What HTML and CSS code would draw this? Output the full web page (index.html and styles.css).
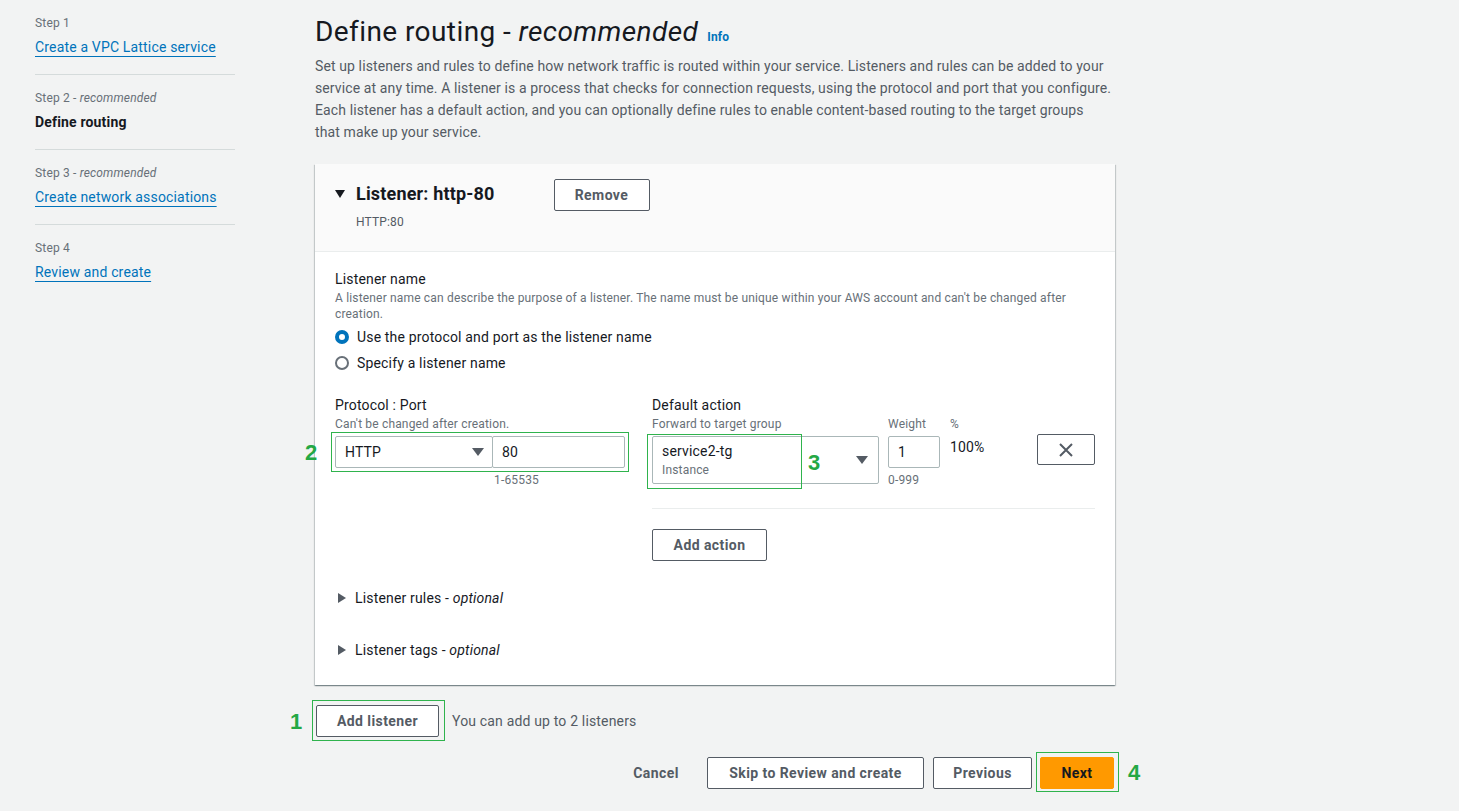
FILE: index.html
```html
<!DOCTYPE html>
<html>
<head>
<meta charset="utf-8">
<link rel="stylesheet" href="styles.css">
</head>
<body>
<div class="page">
  <nav class="steps">
    <div class="step">
      <div class="step-label">Step 1</div>
      <a class="step-link" href="#">Create a VPC Lattice service</a>
    </div>
    <div class="step">
      <div class="step-label">Step 2 - <i>recommended</i></div>
      <div class="step-current">Define routing</div>
    </div>
    <div class="step">
      <div class="step-label">Step 3 - <i>recommended</i></div>
      <a class="step-link" href="#">Create network associations</a>
    </div>
    <div class="step last">
      <div class="step-label">Step 4</div>
      <a class="step-link" href="#">Review and create</a>
    </div>
  </nav>

  <main class="main">
    <h1 class="title"><span>Define routing - <i>recommended</i></span><a class="info" href="#">Info</a></h1>
    <p class="desc">Set up listeners and rules to define how network traffic is routed within your service. Listeners and rules can be added to your service at any time. A listener is a process that checks for connection requests, using the protocol and port that you configure. Each listener has a default action, and you can optionally define rules to enable content-based routing to the target groups<br>that make up your service.</p>

    <section class="card">
      <div class="card-head">
        <svg class="caret-down" width="10" height="8" viewBox="0 0 10 8"><path d="M0 0 H10 L5 8 Z" fill="#16191f"/></svg>
        <div class="head-text">
          <div class="head-title">Listener: http-80</div>
          <div class="head-sub">HTTP:80</div>
        </div>
        <button class="btn remove">Remove</button>
      </div>
      <div class="card-body">
        <div class="field-label">Listener name</div>
        <div class="field-desc">A listener name can describe the purpose of a listener. The name must be unique within your AWS account and can't be changed after creation.</div>
        <div class="radios">
          <label class="radio"><span class="dot on"></span>Use the protocol and port as the listener name</label>
          <label class="radio"><span class="dot"></span>Specify a listener name</label>
        </div>

        <div class="grid">
          <div class="col-left">
            <div class="field-label">Protocol : Port</div>
            <div class="field-desc">Can't be changed after creation.</div>
            <div class="proto-row">
              <div class="select proto"><span>HTTP</span><svg class="sel-caret" width="12" height="8" viewBox="0 0 12 8"><path d="M0 0 H12 L6 8 Z" fill="#545b64"/></svg></div>
              <div class="input port">80</div>
              <span class="mark mark-proto"></span>
              <span class="num num2">2</span>
            </div>
            <div class="constraint port-c">1-65535</div>
          </div>
          <div class="col-right">
            <div class="field-label">Default action</div>
            <div class="action-row">
              <div class="tg">
                <div class="field-desc">Forward to target group</div>
                <div class="select tg-sel">
                  <div class="tg-text"><div class="tg-name">service2-tg</div><div class="tg-type">Instance</div></div>
                  <svg class="sel-caret" width="12" height="8" viewBox="0 0 12 8"><path d="M0 0 H12 L6 8 Z" fill="#545b64"/></svg>
                  <span class="mark mark-tg"></span>
                  <span class="num num3">3</span>
                </div>
              </div>
              <div class="weight">
                <div class="field-desc">Weight</div>
                <div class="input w-in">1</div>
                <div class="constraint">0-999</div>
              </div>
              <div class="pct">
                <div class="field-desc">%</div>
                <div class="pct-val">100%</div>
              </div>
              <button class="btn xbtn"><svg width="16" height="16" viewBox="0 0 16 16"><path d="M2 2 L14 14 M14 2 L2 14" stroke="#545b64" stroke-width="2" fill="none"/></svg></button>
            </div>
            <div class="divider"></div>
            <button class="btn add-action">Add action</button>
          </div>
        </div>

        <div class="expander first"><svg width="8" height="10" viewBox="0 0 8 10"><path d="M0 0 L8 5 L0 10 Z" fill="#545b64"/></svg><span>Listener rules - <i>optional</i></span></div>
        <div class="expander"><svg width="8" height="10" viewBox="0 0 8 10"><path d="M0 0 L8 5 L0 10 Z" fill="#545b64"/></svg><span>Listener tags - <i>optional</i></span></div>
      </div>
    </section>

    <div class="add-row">
      <div class="add-wrap">
        <button class="btn add-listener">Add listener</button>
        <span class="mark mark-add"></span>
        <span class="num num1">1</span>
      </div>
      <span class="add-hint">You can add up to 2 listeners</span>
    </div>

    <div class="footer">
      <button class="btn link">Cancel</button>
      <button class="btn skip">Skip to Review and create</button>
      <button class="btn prev">Previous</button>
      <div class="next-wrap">
        <button class="btn primary">Next</button>
        <span class="mark mark-next"></span>
        <span class="num num4">4</span>
      </div>
    </div>
  </main>
</div>
</body>
</html>
```

FILE: styles.css
```css
* { box-sizing: border-box; }
html, body { margin: 0; padding: 0; }
body {
  background: #f2f3f3;
  font-family: Roboto, "Liberation Sans", Arial, sans-serif;
  color: #16191f;
  font-size: 14px;
  line-height: 22px;
  letter-spacing: 0.012em;
}
.page {
  display: flex;
  padding-left: 35px;
  width: 1459px;
  height: 811px;
  overflow: hidden;
}
.steps {
  width: 200px;
  flex: none;
}
.step {
  display: flex;
  flex-direction: column;
  align-items: flex-start;
  gap: 5px;
  padding: 15px 0 16px;
  border-bottom: 1px solid #d5dbdb;
}
.step.last { border-bottom: none; }
.step-label {
  font-size: 12px;
  line-height: 16px;
  color: #687078;
}
.step-label i { font-style: italic; }
.step-link {
  color: #0073bb;
  text-decoration: underline;
  text-underline-offset: 4px;
  text-decoration-thickness: 1px;
}
.step-current { font-weight: 700; }

.main {
  width: 800px;
  margin-left: 80px;
  flex: none;
  padding-top: 14px;
}
.title {
  display: flex;
  align-items: baseline;
  gap: 9px;
  margin: 0;
  font-size: 28px;
  line-height: 36px;
  font-weight: 400;
  letter-spacing: 0.015em;
  color: #16191f;
}
.title i { font-style: italic; }
.info {
  font-size: 12px;
  line-height: 16px;
  font-weight: 700;
  letter-spacing: 0.012em;
  color: #0073bb;
  text-decoration: none;
}
.desc {
  margin: 5px 0 0;
  color: #545b64;
  font-size: 14px;
  line-height: 22px;
  letter-spacing: 0.008em;
}

.card {
  margin-top: 21px;
  background: #fff;
  box-shadow: 0 1px 1px 0 rgba(0,28,36,.3), 1px 1px 1px 0 rgba(0,28,36,.15), -1px 1px 1px 0 rgba(0,28,36,.15);
}
.card-head {
  display: flex;
  align-items: flex-start;
  background: #fafafa;
  padding: 15px 20px 21px;
  border-bottom: 1px solid #eaeded;
}
.caret-down { margin-top: 11px; flex: none; }
.head-text { margin-left: 11px; margin-top: 4px; }
.head-title {
  font-size: 18px;
  line-height: 22px;
  font-weight: 700;
}
.head-sub {
  margin-top: 9px;
  font-size: 12px;
  line-height: 16px;
  color: #545b64;
}
.remove { margin-left: 59px; width: 96px; padding: 4px 0; }

.btn {
  font-family: inherit;
  font-size: 14px;
  line-height: 22px;
  font-weight: 700;
  letter-spacing: 0.03em;
  color: #545b64;
  background: #fff;
  border: 1px solid #545b64;
  border-radius: 2px;
  padding: 4px 20px;
  height: 32px;
  cursor: pointer;
}

.card-body { padding: 16px 20px 24px; }
.field-label { font-size: 14px; line-height: 22px; color: #16191f; }
.field-desc { font-size: 12px; line-height: 16px; color: #687078; }
.radios { margin-top: 4px; display: flex; flex-direction: column; gap: 4px; }
.radio { display: flex; align-items: center; height: 22px; }
.dot {
  width: 14px; height: 14px; border-radius: 50%;
  border: 2px solid #687078;
  margin-right: 8px;
  background: #fff;
}
.dot.on { border: 4px solid #0073bb; }

.grid {
  display: grid;
  grid-template-columns: 297px 1fr;
  column-gap: 20px;
  margin-top: 20px;
}
.proto-row {
  position: relative;
  display: flex;
  margin-top: 4px;
  width: 290px;
}
.select {
  position: relative;
  display: flex;
  align-items: center;
  justify-content: space-between;
  border: 1px solid #aab7b8;
  border-radius: 2px;
  background: #fff;
  padding: 0 8px 0 9px;
}
.proto { width: 158px; height: 32px; }
.sel-caret { flex: none; }
.input {
  border: 1px solid #aab7b8;
  border-radius: 2px;
  background: #fff;
  height: 32px;
  padding: 4px 9px;
}
.port { width: 133px; margin-left: -1px; }
.constraint { font-size: 12px; line-height: 16px; color: #687078; margin-top: 4px; }
.port-c { margin-left: 159px; }

.action-row { display: flex; align-items: flex-start; }
.tg { width: 227px; }
.tg-sel { margin-top: 4px; height: 48px; padding: 0 10px 0 9px; }
.tg-name { font-size: 14px; line-height: 18px; }
.tg-type { font-size: 12px; line-height: 16px; color: #687078; margin-top: 2px; }
.weight { width: 52px; margin-left: 9px; }
.w-in { margin-top: 4px; width: 52px; }
.pct { margin-left: 10px; width: 87px; }
.pct-val { margin-top: 4px; }
.xbtn {
  margin-top: 18px;
  width: 58px;
  height: 31px;
  padding: 0;
  display: flex;
  align-items: center;
  justify-content: center;
}
.divider { height: 1px; background: #eaeded; margin-top: 20px; }
.add-action { margin-top: 20px; width: 115px; padding: 4px 0; }

.expander {
  display: flex;
  align-items: center;
  height: 22px;
  margin-top: 30px;
  padding-left: 3px;
}
.expander.first { margin-top: 26px; }
.expander svg { margin-right: 9px; }
.expander i { font-style: italic; }

.add-row { display: flex; align-items: center; margin-top: 20px; }
.add-wrap { position: relative; margin-left: 1px; }
.add-listener { width: 123px; padding: 4px 0; }
.add-hint { margin-left: 13px; color: #545b64; }

.footer {
  display: flex;
  justify-content: flex-end;
  align-items: center;
  margin-top: 20px;
  gap: 8px;
}
.btn.link { border-color: transparent; background: transparent; padding: 4px 0; width: 48px; margin-right: 19px; }
.skip { width: 217px; padding: 4px 0; margin-right: 1px; }
.prev { width: 99px; padding: 4px 0; }
.next-wrap { position: relative; margin-right: 1px; }
.btn.primary { background: #ff9900; border-color: #ff9900; color: #16191f; width: 74px; padding: 4px 0; }

/* annotation overlays */
.mark { position: absolute; border: 1px solid #2fb34d; pointer-events: none; }
.num {
  position: absolute;
  font-family: "Liberation Sans", Arial, sans-serif;
  font-weight: 700;
  font-size: 22px;
  line-height: 22px;
  letter-spacing: 0;
  color: #24a844;
}
.mark-proto { left: -4px; top: -4px; width: 298px; height: 40px; }
.num2 { left: -30px; top: 6px; }
.mark-tg { left: -6px; top: -3px; width: 155px; height: 55px; }
.num3 { left: 155px; top: 15px; }
.mark-add { left: -4px; top: -5px; width: 133px; height: 41px; }
.num1 { left: -26px; top: 6px; }
.mark-next { left: -4px; top: -5px; width: 83px; height: 40px; }
.num4 { left: 88px; top: 5px; }
```
